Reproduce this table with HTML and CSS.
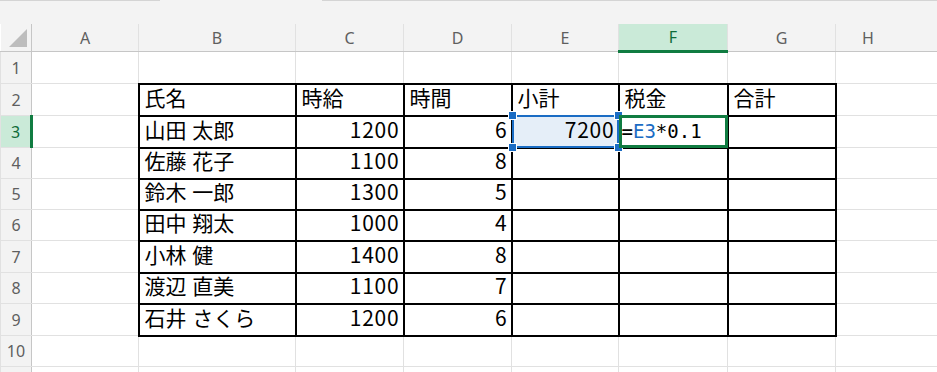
FILE: index.html
```html
<!DOCTYPE html>
<html lang="ja">
<head>
<meta charset="utf-8">
<title>Sheet</title>
<link rel="stylesheet" href="styles.css">
</head>
<body>
<div class="topbar">
  <div class="namebox"></div>
  <div class="topgap"></div>
  <div class="fbar"></div>
</div>
<table class="sheet">
  <colgroup>
    <col class="w-rh"><col class="w-a"><col class="w-b"><col class="w-c"><col class="w-d"><col class="w-e"><col class="w-f"><col class="w-g"><col class="w-h">
  </colgroup>
  <thead>
    <tr class="hdr">
      <th class="corner"><span class="tri"></span></th>
      <th>A</th><th>B</th><th>C</th><th>D</th><th>E</th><th class="hsel">F</th><th>G</th><th class="hpart">H</th>
    </tr>
  </thead>
  <tbody>
    <tr class="r32"><th class="rh">1</th><td></td><td></td><td></td><td></td><td></td><td></td><td></td><td></td></tr>
    <tr class="r32"><th class="rh">2</th><td></td><td class="d">氏名</td><td class="d">時給</td><td class="d">時間</td><td class="d">小計</td><td class="d">税金</td><td class="d">合計</td><td></td></tr>
    <tr class="r32"><th class="rh rsel">3</th><td></td><td class="d">山田 太郎</td><td class="d n">1200</td><td class="d n">6</td><td class="d n sel"><span class="selbox"><i class="hd tl"></i><i class="hd tr"></i><i class="hd bl"></i><i class="hd br"></i></span>7200</td><td class="d active"><span class="formula">=<span class="ref">E3</span>*0.1</span></td><td class="d"></td><td></td></tr>
    <tr class="r31"><th class="rh">4</th><td></td><td class="d">佐藤 花子</td><td class="d n">1100</td><td class="d n">8</td><td class="d"></td><td class="d"></td><td class="d"></td><td></td></tr>
    <tr class="r31"><th class="rh">5</th><td></td><td class="d">鈴木 一郎</td><td class="d n">1300</td><td class="d n">5</td><td class="d"></td><td class="d"></td><td class="d"></td><td></td></tr>
    <tr class="r31"><th class="rh">6</th><td></td><td class="d">田中 翔太</td><td class="d n">1000</td><td class="d n">4</td><td class="d"></td><td class="d"></td><td class="d"></td><td></td></tr>
    <tr class="r32"><th class="rh">7</th><td></td><td class="d">小林 健</td><td class="d n">1400</td><td class="d n">8</td><td class="d"></td><td class="d"></td><td class="d"></td><td></td></tr>
    <tr class="r31"><th class="rh">8</th><td></td><td class="d">渡辺 直美</td><td class="d n">1100</td><td class="d n">7</td><td class="d"></td><td class="d"></td><td class="d"></td><td></td></tr>
    <tr class="r32"><th class="rh">9</th><td></td><td class="d">石井 さくら</td><td class="d n">1200</td><td class="d n">6</td><td class="d"></td><td class="d"></td><td class="d"></td><td></td></tr>
    <tr class="r31"><th class="rh">10</th><td></td><td></td><td></td><td></td><td></td><td></td><td></td><td></td></tr>
    <tr class="rlast"><th class="rh"></th><td></td><td></td><td></td><td></td><td></td><td></td><td></td><td></td></tr>
  </tbody>
</table>
</body>
</html>
```

FILE: styles.css
```css
html, body {
  margin: 0;
  padding: 0;
  background: #ffffff;
  overflow: hidden;
}

body {
  width: 937px;
  height: 372px;
  font-family: "Noto Sans CJK JP", "Noto Sans", sans-serif;
}

.topbar {
  display: flex;
  height: 24px;
  background: #f3f3f3;
}

.namebox {
  width: 160px;
  border-top: 1px solid #d4d4d4;
}

.topgap {
  width: 162px;
}

.fbar {
  flex: 1;
  border-top: 1px solid #d4d4d4;
}

.sheet {
  border-collapse: collapse;
  table-layout: fixed;
  width: 937px;
}

.w-rh { width: 31px; }
.w-a { width: 107px; }
.w-b { width: 157px; }
.w-c { width: 108px; }
.w-d { width: 108px; }
.w-e { width: 107px; }
.w-f { width: 109px; }
.w-g { width: 108px; }
.w-h { width: 102px; }

.sheet td,
.sheet th {
  border: 1px solid #e1e1e1;
  padding: 0;
  overflow: visible;
  white-space: nowrap;
}

.hdr th {
  height: 26px;
  background: #f3f3f3;
  border-top: none;
  border-bottom: 1px solid #c6c6c6;
  font-family: "Noto Sans", sans-serif;
  font-weight: 400;
  font-size: 16px;
  color: #5f5f5f;
  text-align: center;
  vertical-align: middle;
  line-height: 20px;
}

.hdr th.corner {
  border-left: none;
  border-right: 1px solid #c6c6c6;
  vertical-align: bottom;
  text-align: right;
}

.hdr th.hpart {
  text-align: left;
  padding-left: 26px;
  border-right: none;
}

.tri {
  display: block;
  width: 0;
  height: 0;
  margin: 0 4px 4px auto;
  border-left: 18px solid transparent;
  border-bottom: 18px solid #bdbdbd;
}

.hdr th.hsel {
  background: #caead8;
  color: #0e6b38;
  border-left: 1px solid #9fd8b7;
  border-bottom: 3px solid #107c41;
}

.rh {
  background: #f3f3f3;
  border-left: none;
  border-right: 1px solid #c6c6c6 !important;
  font-family: "Noto Sans", sans-serif;
  font-weight: 400;
  font-size: 16px;
  color: #5f5f5f;
  text-align: center;
  vertical-align: middle;
  line-height: 20px;
}

.rh.rsel {
  background: #caead8;
  color: #0e6b38;
  border-right: 3px solid #107c41 !important;
}

.r32 { height: 32px; }
.r31 { height: 31px; }

.sheet td {
  font-size: 21px;
  line-height: 20px;
  color: #000000;
  vertical-align: bottom;
  padding: 0 4px 8px 5px;
  word-spacing: 1px;
}

.sheet .rlast td,
.sheet .rlast th {
  height: 6px;
  padding: 0;
  line-height: 0;
  font-size: 0;
}

.sheet td.d {
  border: 2px solid #000000;
}

.sheet td.n {
  text-align: right;
  padding-right: 3px;
  letter-spacing: 0.8px;
}

.sel {
  position: relative;
  background: #e5eef8;
}

.selbox {
  position: absolute;
  left: -1px;
  top: -2px;
  right: -1px;
  bottom: -1px;
  border: 2px solid #1a6cc4;
}

.hd {
  position: absolute;
  width: 7px;
  height: 7px;
  background: #1a6cc4;
  border: 1px solid #ffffff;
}

.hd.tl { left: -6px; top: -6px; }
.hd.tr { right: -6px; top: -6px; }
.hd.bl { left: -6px; bottom: -6px; }
.hd.br { right: -6px; bottom: -6px; }

.active {
  position: relative;
}

.active::after {
  content: "";
  position: absolute;
  left: -1px;
  top: -2px;
  right: -1px;
  bottom: -1px;
  border: 3px solid #107c41;
}

.formula {
  position: relative;
  top: 2px;
  font-family: "DejaVu Sans Mono", "Liberation Mono", monospace;
  font-size: 19px;
  font-weight: 400;
  margin-left: -3px;
  word-spacing: 0;
  letter-spacing: 0;
}

.ref {
  color: #1a6cc4;
}
```
